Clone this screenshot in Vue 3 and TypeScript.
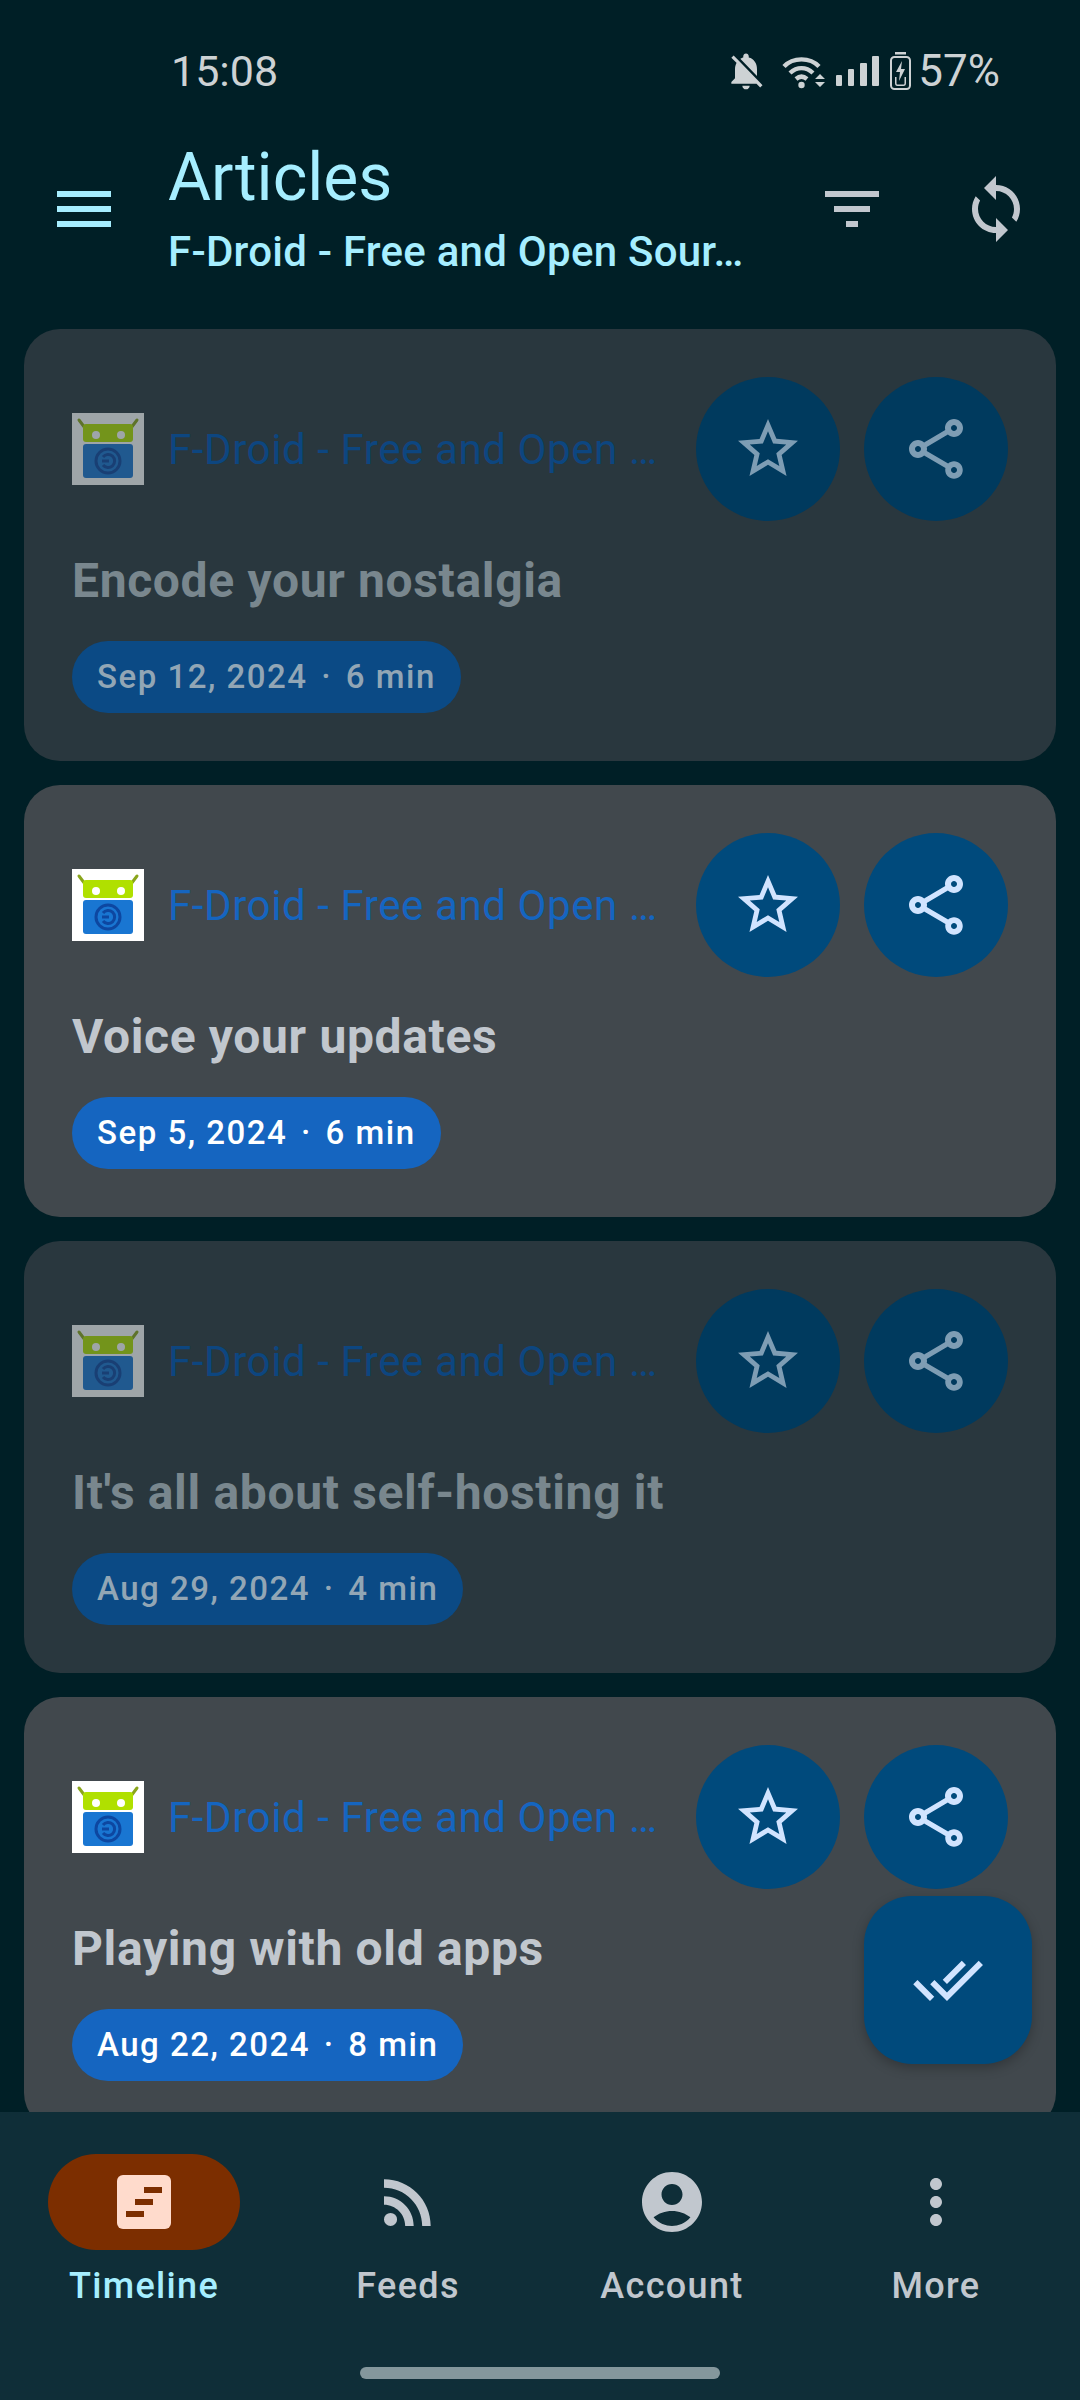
<script setup lang="ts">
interface Article {
  title: string
  date: string
  length: string
  read: boolean
}

const articles: Article[] = [
  { title: 'Encode your nostalgia', date: 'Sep 12, 2024', length: '6 min', read: true },
  { title: 'Voice your updates', date: 'Sep 5, 2024', length: '6 min', read: false },
  { title: "It's all about self-hosting it", date: 'Aug 29, 2024', length: '4 min', read: true },
  { title: 'Playing with old apps', date: 'Aug 22, 2024', length: '8 min', read: false },
]

const navItems = [
  {
    label: 'Feeds',
    path: 'M4 4.44v2.83c7.03 0 12.73 5.7 12.73 12.73h2.83c0-8.59-6.97-15.56-15.56-15.56zm0 5.66v2.83c3.9 0 7.07 3.17 7.07 7.07h2.83c0-5.47-4.43-9.9-9.9-9.9zM6.18 15.64a2.18 2.18 0 1 0 0 4.36 2.18 2.18 0 0 0 0-4.36z',
  },
  {
    label: 'Account',
    path: 'M12 2C6.48 2 2 6.48 2 12s4.48 10 10 10 10-4.48 10-10S17.52 2 12 2zm0 4c1.93 0 3.5 1.57 3.5 3.5S13.93 13 12 13s-3.5-1.57-3.5-3.5S10.07 6 12 6zm0 14c-2.03 0-4.43-.82-6.14-2.88C7.55 15.8 9.68 15 12 15s4.45.8 6.14 2.12C16.43 19.18 14.03 20 12 20z',
  },
  {
    label: 'More',
    path: 'M12 8c1.1 0 2-.9 2-2s-.9-2-2-2-2 .9-2 2 .9 2 2 2zm0 2c-1.1 0-2 .9-2 2s.9 2 2 2 2-.9 2-2-.9-2-2-2zm0 6c-1.1 0-2 .9-2 2s.9 2 2 2 2-.9 2-2-.9-2-2-2z',
  },
]
</script>

<template>
  <div class="screen">
    <div class="status">
      <span class="time">15:08</span>
      <div class="status-right">
        <svg class="bell" viewBox="0 0 24 24" fill="currentColor">
          <path d="M20 18.69L7.84 6.14 5.27 3.49 4 4.76l2.8 2.8v.01c-.52.99-.8 2.16-.8 3.42v5l-2 2v1h13.73l2 2L21 19.72l-1-1.03zM12 22c1.11 0 2-.89 2-2h-4c0 1.11.89 2 2 2zm6-7.32V11c0-3.08-1.64-5.64-4.5-6.32V4c0-.83-.67-1.5-1.5-1.5s-1.5.67-1.5 1.5v.68c-.15.03-.29.08-.42.12-.1.03-.2.07-.3.11h-.01c-.2.08-.4.18-.59.28-.1.05-.2.12-.3.18L18 14.68z" />
        </svg>
        <svg class="wifi" viewBox="0 0 44 36" fill="none" stroke="currentColor" stroke-width="4.4">
          <path d="M2 13.5C11 4 28 4 37 13.5" />
          <path d="M8 20c7-6.5 16-6.5 23 0" />
          <path d="M14 26c3.5-3 7.5-3 11 0" />
          <circle cx="19.5" cy="32" r="3.2" fill="currentColor" stroke="none" />
          <path d="M33 26l5-5 5 5zM33 29l5 5 5-5z" fill="currentColor" stroke="none" />
        </svg>
        <svg class="signal" viewBox="0 0 43 30" fill="currentColor">
          <rect x="0" y="19" width="6" height="11" rx="1" />
          <rect x="12" y="13" width="6" height="17" rx="1" />
          <rect x="24" y="7" width="7" height="23" rx="1" />
          <rect x="36" y="0" width="7" height="30" rx="1" />
        </svg>
        <svg class="battery" viewBox="0 0 21 38" fill="none" stroke="currentColor">
          <rect x="5" y="0" width="11" height="2.5" fill="currentColor" stroke="none" />
          <rect x="1" y="5" width="19" height="32" rx="3.5" stroke-width="2" />
          <path d="M5 25v6c0 2 .8 3 2.5 3h6c1.7 0 2.5-1 2.5-3v-6l-1.5 0v6c0 1-.3 1.5-1 1.5h-6c-.7 0-1-.5-1-1.5v-6z" fill="currentColor" stroke="none" />
          <path d="M12 9l-6 11h4l-1 9 6-12h-4z" fill="currentColor" stroke="none" />
        </svg>
        <span class="percent">57%</span>
      </div>
    </div>

    <header class="appbar">
      <svg class="icon menu-icon" viewBox="0 0 24 24" fill="currentColor">
        <path d="M3 18h18v-2H3v2zm0-5h18v-2H3v2zm0-7v2h18V6H3z" />
      </svg>
      <div class="heading">
        <h1 class="heading-title">Articles</h1>
        <p class="heading-sub">F-Droid - Free and Open Sour…</p>
      </div>
      <svg class="icon action" viewBox="0 0 24 24" fill="currentColor">
        <path d="M10 18h4v-2h-4v2zM3 6v2h18V6H3zm3 7h12v-2H6v2z" />
      </svg>
      <svg class="icon action" viewBox="0 0 24 24" fill="currentColor">
        <path d="M12 4V1L8 5l4 4V6c3.31 0 6 2.69 6 6 0 1.01-.25 1.97-.7 2.8l1.46 1.46C19.54 15.03 20 13.57 20 12c0-4.42-3.58-8-8-8zm0 14c-3.31 0-6-2.69-6-6 0-1.01.25-1.97.7-2.8L5.24 7.74C4.46 8.97 4 10.43 4 12c0 4.42 3.58 8 8 8v3l4-4-4-4v3z" />
      </svg>
    </header>

    <main class="list">
      <article v-for="item in articles" :key="item.title" class="card" :class="{ read: item.read }">
        <div class="card-head">
          <svg class="logo" viewBox="0 0 72 72">
            <rect width="72" height="72" fill="#fff" />
            <path d="M7 7l6 8M65 7l-6 8" stroke="#8aa51c" stroke-width="3" stroke-linecap="round" />
            <rect x="11" y="11" width="50" height="18" rx="3" fill="#b0e000" />
            <circle cx="24" cy="22" r="4" fill="#fff" />
            <circle cx="49" cy="22" r="4" fill="#fff" />
            <rect x="11" y="31" width="50" height="34" rx="3" fill="#1976d2" />
            <circle cx="36" cy="48" r="12" fill="none" stroke="#0d47a1" stroke-width="3" />
            <path d="M31 44a6.5 6.5 0 1 1 0 8M30 48h7" fill="none" stroke="#0d47a1" stroke-width="3" />
          </svg>
          <span class="feed-name">F-Droid - Free and Open …</span>
          <button class="round-btn">
            <svg class="icon" viewBox="0 0 24 24" fill="currentColor">
              <path d="M22 9.24l-7.19-.62L12 2 9.19 8.63 2 9.24l5.46 4.73L5.82 21 12 17.27 18.18 21l-1.63-7.03L22 9.24zM12 15.4l-3.76 2.27 1-4.28-3.32-2.88 4.38-.38L12 6.1l1.71 4.04 4.38.38-3.32 2.88 1 4.28L12 15.4z" />
            </svg>
          </button>
          <button class="round-btn">
            <svg class="icon" viewBox="0 0 24 24" fill="currentColor">
              <path d="M18 16.08c-.76 0-1.44.3-1.96.77L8.91 12.7c.05-.23.09-.46.09-.7s-.04-.47-.09-.7l7.05-4.11c.54.5 1.25.81 2.04.81 1.66 0 3-1.34 3-3s-1.34-3-3-3-3 1.34-3 3c0 .24.04.47.09.7L8.04 9.81C7.5 9.31 6.79 9 6 9c-1.66 0-3 1.34-3 3s1.34 3 3 3c.79 0 1.5-.31 2.04-.81l7.12 4.16c-.05.21-.08.43-.08.65 0 1.61 1.31 2.92 2.92 2.92s2.92-1.31 2.92-2.92-1.31-2.92-2.92-2.92zM18 4c.55 0 1 .45 1 1s-.45 1-1 1-1-.45-1-1 .45-1 1-1zM6 13c-.55 0-1-.45-1-1s.45-1 1-1 1 .45 1 1-.45 1-1 1zm12 7.02c-.55 0-1-.45-1-1s.45-1 1-1 1 .45 1 1-.45 1-1 1z" />
            </svg>
          </button>
        </div>
        <h2 class="card-title">{{ item.title }}</h2>
        <span class="meta">{{ item.date }} <span class="dot">·</span> {{ item.length }}</span>
      </article>
    </main>

    <button class="fab">
      <svg class="icon" viewBox="0 0 24 24" fill="currentColor">
        <path d="M18 7l-1.41-1.41-6.34 6.34 1.41 1.41L18 7zm4.24-1.41L11.66 16.17 7.48 12l-1.41 1.41L11.66 19l12-12-1.42-1.41zM.41 13.41L6 19l1.41-1.41L1.83 12 .41 13.41z" />
      </svg>
    </button>

    <nav class="nav">
      <div class="nav-items">
        <div class="nav-item active">
          <div class="nav-pill">
            <svg class="icon" viewBox="0 0 24 24">
              <rect x="3" y="3" width="18" height="18" rx="2" fill="#ffdbcc" />
              <path d="M12 7h6v2h-6zM9 11h6v2H9zM6 15h6v2H6z" fill="#7c2e00" />
            </svg>
          </div>
          <span class="nav-label">Timeline</span>
        </div>
        <div v-for="nav in navItems" :key="nav.label" class="nav-item">
          <div class="nav-pill">
            <svg class="icon" viewBox="0 0 24 24" fill="currentColor">
              <path :d="nav.path" />
            </svg>
          </div>
          <span class="nav-label">{{ nav.label }}</span>
        </div>
      </div>
      <div class="home-bar"></div>
    </nav>
  </div>
</template>

<style scoped>
.screen {
  position: relative;
  display: flex;
  flex-direction: column;
  width: 1080px;
  height: 2400px;
  overflow: hidden;
  background: #001f26;
  font-family: Roboto, 'Liberation Sans', sans-serif;
}

.icon {
  display: block;
  width: 72px;
  height: 72px;
  flex: none;
}

.status {
  display: flex;
  align-items: center;
  justify-content: space-between;
  height: 100px;
  flex: none;
  padding: 42px 80px 0 171px;
  box-sizing: border-box;
  color: #cdd2d4;
  font-size: 43px;
}

.status-right {
  display: flex;
  align-items: center;
}

.bell {
  width: 44px;
  height: 44px;
  margin-right: 14px;
}

.wifi {
  width: 44px;
  height: 36px;
  margin-right: 10px;
}

.signal {
  width: 43px;
  height: 30px;
  margin-right: 11px;
}

.battery {
  width: 21px;
  height: 38px;
  margin-right: 7px;
}

.percent {
  font-size: 44px;
}

.appbar {
  display: flex;
  align-items: center;
  height: 229px;
  flex: none;
  padding: 0 48px 12px;
  box-sizing: border-box;
  color: #a6eeff;
}

.menu-icon {
  margin-right: 48px;
}

.heading {
  flex: 1;
  min-width: 0;
  padding-right: 72px;
}

.heading-title {
  margin: 0;
  font-size: 66px;
  font-weight: 400;
  line-height: 84px;
}

.heading-sub {
  margin: 2px 0 0;
  font-size: 42px;
  font-weight: 500;
  letter-spacing: 0.25px;
  line-height: 60px;
  white-space: nowrap;
}

.action {
  color: #c1c7ce;
}

.action + .action {
  margin-left: 72px;
}

.list {
  flex: 1;
  min-height: 0;
  padding: 0 24px;
  overflow: hidden;
}

.card {
  display: block;
  margin-bottom: 24px;
  padding: 48px;
  border-radius: 36px;
  background: #41484d;
}

.card.read {
  background: #29373e;
}

.card-head {
  display: flex;
  align-items: center;
  height: 144px;
}

.logo {
  display: block;
  width: 72px;
  height: 72px;
  flex: none;
  margin-right: 24px;
}

.read .logo {
  opacity: 0.55;
}

.feed-name {
  flex: 1;
  min-width: 0;
  margin-right: 24px;
  color: #1565c0;
  font-size: 42px;
  letter-spacing: 0.6px;
  white-space: nowrap;
}

.read .feed-name {
  color: #0d4680;
}

.round-btn {
  display: flex;
  align-items: center;
  justify-content: center;
  width: 144px;
  height: 144px;
  flex: none;
  padding: 0;
  border: 0;
  border-radius: 50%;
  background: #004a7c;
  color: #d1e4ff;
}

.round-btn + .round-btn {
  margin-left: 24px;
}

.read .round-btn {
  background: #003a5e;
  color: #7e9db4;
}

.card-title {
  margin: 24px 0;
  color: #c1c7ce;
  font-size: 48px;
  font-weight: 700;
  letter-spacing: 0.65px;
  line-height: 72px;
}

.read .card-title {
  color: #79878e;
}

.meta {
  display: inline-block;
  height: 72px;
  padding: 0 25px;
  border-radius: 36px;
  background: #1565c0;
  color: #fff;
  font-size: 33px;
  font-weight: 500;
  letter-spacing: 1.5px;
  line-height: 72px;
  vertical-align: top;
}

.dot {
  margin: 0 4px;
}

.read .meta {
  background: #0b4a85;
  color: #92a6b5;
}

.fab {
  position: absolute;
  top: 1896px;
  left: 864px;
  display: flex;
  align-items: center;
  justify-content: center;
  width: 168px;
  height: 168px;
  padding: 0;
  border: 0;
  border-radius: 48px;
  background: #004a7c;
  box-shadow: 0 4px 12px rgba(0, 0, 0, 0.25);
  color: #d1e4ff;
}

.nav {
  display: flex;
  flex-direction: column;
  align-items: center;
  height: 288px;
  flex: none;
  background: #0f2e38;
}

.nav-items {
  display: grid;
  grid-template-columns: repeat(4, 264px);
  padding-top: 42px;
}

.nav-item {
  display: flex;
  flex-direction: column;
  align-items: center;
  color: #c1c7ce;
}

.nav-pill {
  display: flex;
  align-items: center;
  justify-content: center;
  width: 192px;
  height: 96px;
  border-radius: 48px;
}

.active .nav-pill {
  background: #7c2e00;
}

.nav-label {
  margin-top: 12px;
  font-size: 36px;
  font-weight: 500;
  letter-spacing: 1.35px;
  line-height: 48px;
}

.active .nav-label {
  color: #a6eeff;
}

.home-bar {
  width: 360px;
  height: 12px;
  margin-top: 57px;
  border-radius: 6px;
  background: #84979c;
}
</style>
